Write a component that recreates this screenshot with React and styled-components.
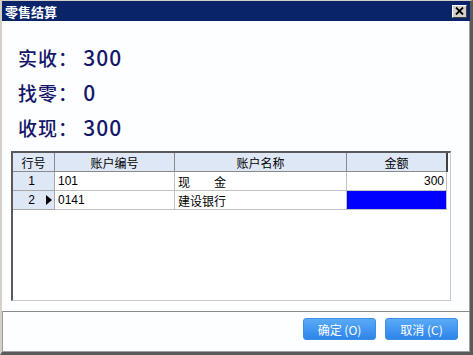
import styled, { createGlobalStyle } from "styled-components";

const GlobalStyle = createGlobalStyle`
  html, body {
    margin: 0;
    padding: 0;
    background: #ffffff;
  }
  * {
    box-sizing: border-box;
  }
`;

const Window = styled.div`
  width: 473px;
  height: 355px;
  display: flex;
  flex-direction: column;
  background: #fdfeff;
  border-top: 1px solid #d4d0c8;
  border-left: 2px solid #d4d0c8;
  border-right: 3px solid #5a5a5a;
  border-bottom: 3px solid #5a5a5a;
  box-shadow: inset -1px -1px 0 #a0a0a0;
  font-family: "Liberation Sans", "Noto Sans CJK SC", sans-serif;
`;

const TitleBar = styled.div`
  height: 20px;
  flex: none;
  display: flex;
  align-items: center;
  justify-content: space-between;
  padding: 0 3px 0 3px;
  background: #0a246a;
`;

const Title = styled.span`
  color: #ffffff;
  font-family: "Noto Sans CJK SC", sans-serif;
  font-weight: 700;
  font-size: 13px;
  letter-spacing: 0;
`;

const CloseButton = styled.div`
  width: 15px;
  height: 13px;
  display: flex;
  align-items: center;
  justify-content: center;
  background: #d4d0c8;
  border-top: 1px solid #ffffff;
  border-left: 1px solid #ffffff;
  border-right: 1px solid #404040;
  border-bottom: 1px solid #404040;
`;

const Main = styled.div`
  flex: 1;
  display: flex;
  flex-direction: column;
  padding: 19px 0 0 9px;
`;

const Summary = styled.div`
  display: flex;
  flex-direction: column;
  padding-left: 7px;
  margin-bottom: 6px;
`;

const SummaryLine = styled.div`
  height: 35px;
  line-height: 35px;
  font-family: "Noto Sans CJK SC", sans-serif;
  font-size: 19px;
  font-weight: 500;
  color: #16166a;
  letter-spacing: 1px;
`;

const Value = styled.span`
  font-size: 21px;
  letter-spacing: 1px;
`;

const Grid = styled.div`
  width: 440px;
  height: 150px;
  background: #ffffff;
  border-top: 2px solid #5a5a5a;
  border-left: 2px solid #5a5a5a;
  border-right: 1px solid #c8c8c8;
  border-bottom: 1px solid #c8c8c8;
`;

const Row = styled.div`
  display: grid;
  grid-template-columns: 42px 120px 172px 100px;
  height: 19px;
`;

const HeadCell = styled.div`
  display: flex;
  align-items: center;
  justify-content: center;
  background: #dde7f6;
  border-right: 1px solid ${(p) => (p.last ? "#404040" : "#8a8a8a")};
  border-bottom: 1px solid #8a8a8a;
  box-shadow: ${(p) => (p.last ? "1px 0 0 #404040" : "none")};
  font-family: "Noto Sans CJK SC", sans-serif;
  font-size: 12px;
  color: #000;
`;

const IndexCell = styled.div`
  position: relative;
  display: flex;
  align-items: center;
  justify-content: center;
  padding-right: 4px;
  background: #dde7f6;
  border-right: 1px solid #a8a8a8;
  border-bottom: 1px solid #a8a8a8;
  font-size: 12px;
  color: #000;
`;

const Pointer = styled.span`
  position: absolute;
  right: 2px;
  top: 4px;
  width: 0;
  height: 0;
  border-top: 5px solid transparent;
  border-bottom: 5px solid transparent;
  border-left: 6px solid #000;
`;

const Cell = styled.div`
  display: flex;
  align-items: center;
  justify-content: ${(p) => (p.right ? "flex-end" : "flex-start")};
  padding: 0 ${(p) => (p.right ? "2px" : "3px")} 0 3px;
  background: ${(p) => (p.selected ? "#0000ff" : "#ffffff")};
  border-right: 1px solid #c0c0c0;
  border-bottom: 1px solid #c0c0c0;
  font-family: "Liberation Sans", "Noto Sans CJK SC", sans-serif;
  font-size: 12px;
  color: #000;
  white-space: pre;
`;

const Footer = styled.div`
  height: 41px;
  flex: none;
  display: flex;
  align-items: flex-start;
  justify-content: flex-end;
  gap: 9px;
  padding: 6px 12px 0 0;
  border-top: 1px solid #8a8a8a;
  border-left: 1px solid #9a9a9a;
`;

const Button = styled.button`
  width: 73px;
  height: 22px;
  border: 1px solid #3d8de4;
  border-radius: 3px;
  background: linear-gradient(#5aaaf6, #2e85ea);
  color: #ffffff;
  font-family: "Noto Sans CJK SC", sans-serif;
  font-size: 12px;
  padding: 0;
  cursor: pointer;
  white-space: pre;
`;

const rows = [
  { index: 1, code: "101", name: "现　　金", amount: "300" },
  { index: 2, code: "0141", name: "建设银行", amount: "", current: true },
];

const summary = [
  { label: "实收", value: "300" },
  { label: "找零", value: "0" },
  { label: "收现", value: "300" },
];

export default function App() {
  return (
    <>
      <GlobalStyle />
      <Window>
        <TitleBar>
          <Title>零售结算</Title>
          <CloseButton>
            <svg width="9" height="8" viewBox="0 0 9 8">
              <path d="M1 0.5 L8 7.5 M8 0.5 L1 7.5" stroke="#000" strokeWidth="1.8" />
            </svg>
          </CloseButton>
        </TitleBar>
        <Main>
          <Summary>
            {summary.map((s) => (
              <SummaryLine key={s.label}>
                {s.label}： <Value>{s.value}</Value>
              </SummaryLine>
            ))}
          </Summary>
          <Grid>
            <Row>
              <HeadCell>行号</HeadCell>
              <HeadCell>账户编号</HeadCell>
              <HeadCell>账户名称</HeadCell>
              <HeadCell last>金额</HeadCell>
            </Row>
            {rows.map((r) => (
              <Row key={r.index}>
                <IndexCell>
                  {r.index}
                  {r.current ? <Pointer /> : null}
                </IndexCell>
                <Cell>{r.code}</Cell>
                <Cell>{r.name}</Cell>
                <Cell right selected={r.current}>
                  {r.amount}
                </Cell>
              </Row>
            ))}
          </Grid>
        </Main>
        <Footer>
          <Button>确定 (O)</Button>
          <Button>取消 (C)</Button>
        </Footer>
      </Window>
    </>
  );
}
